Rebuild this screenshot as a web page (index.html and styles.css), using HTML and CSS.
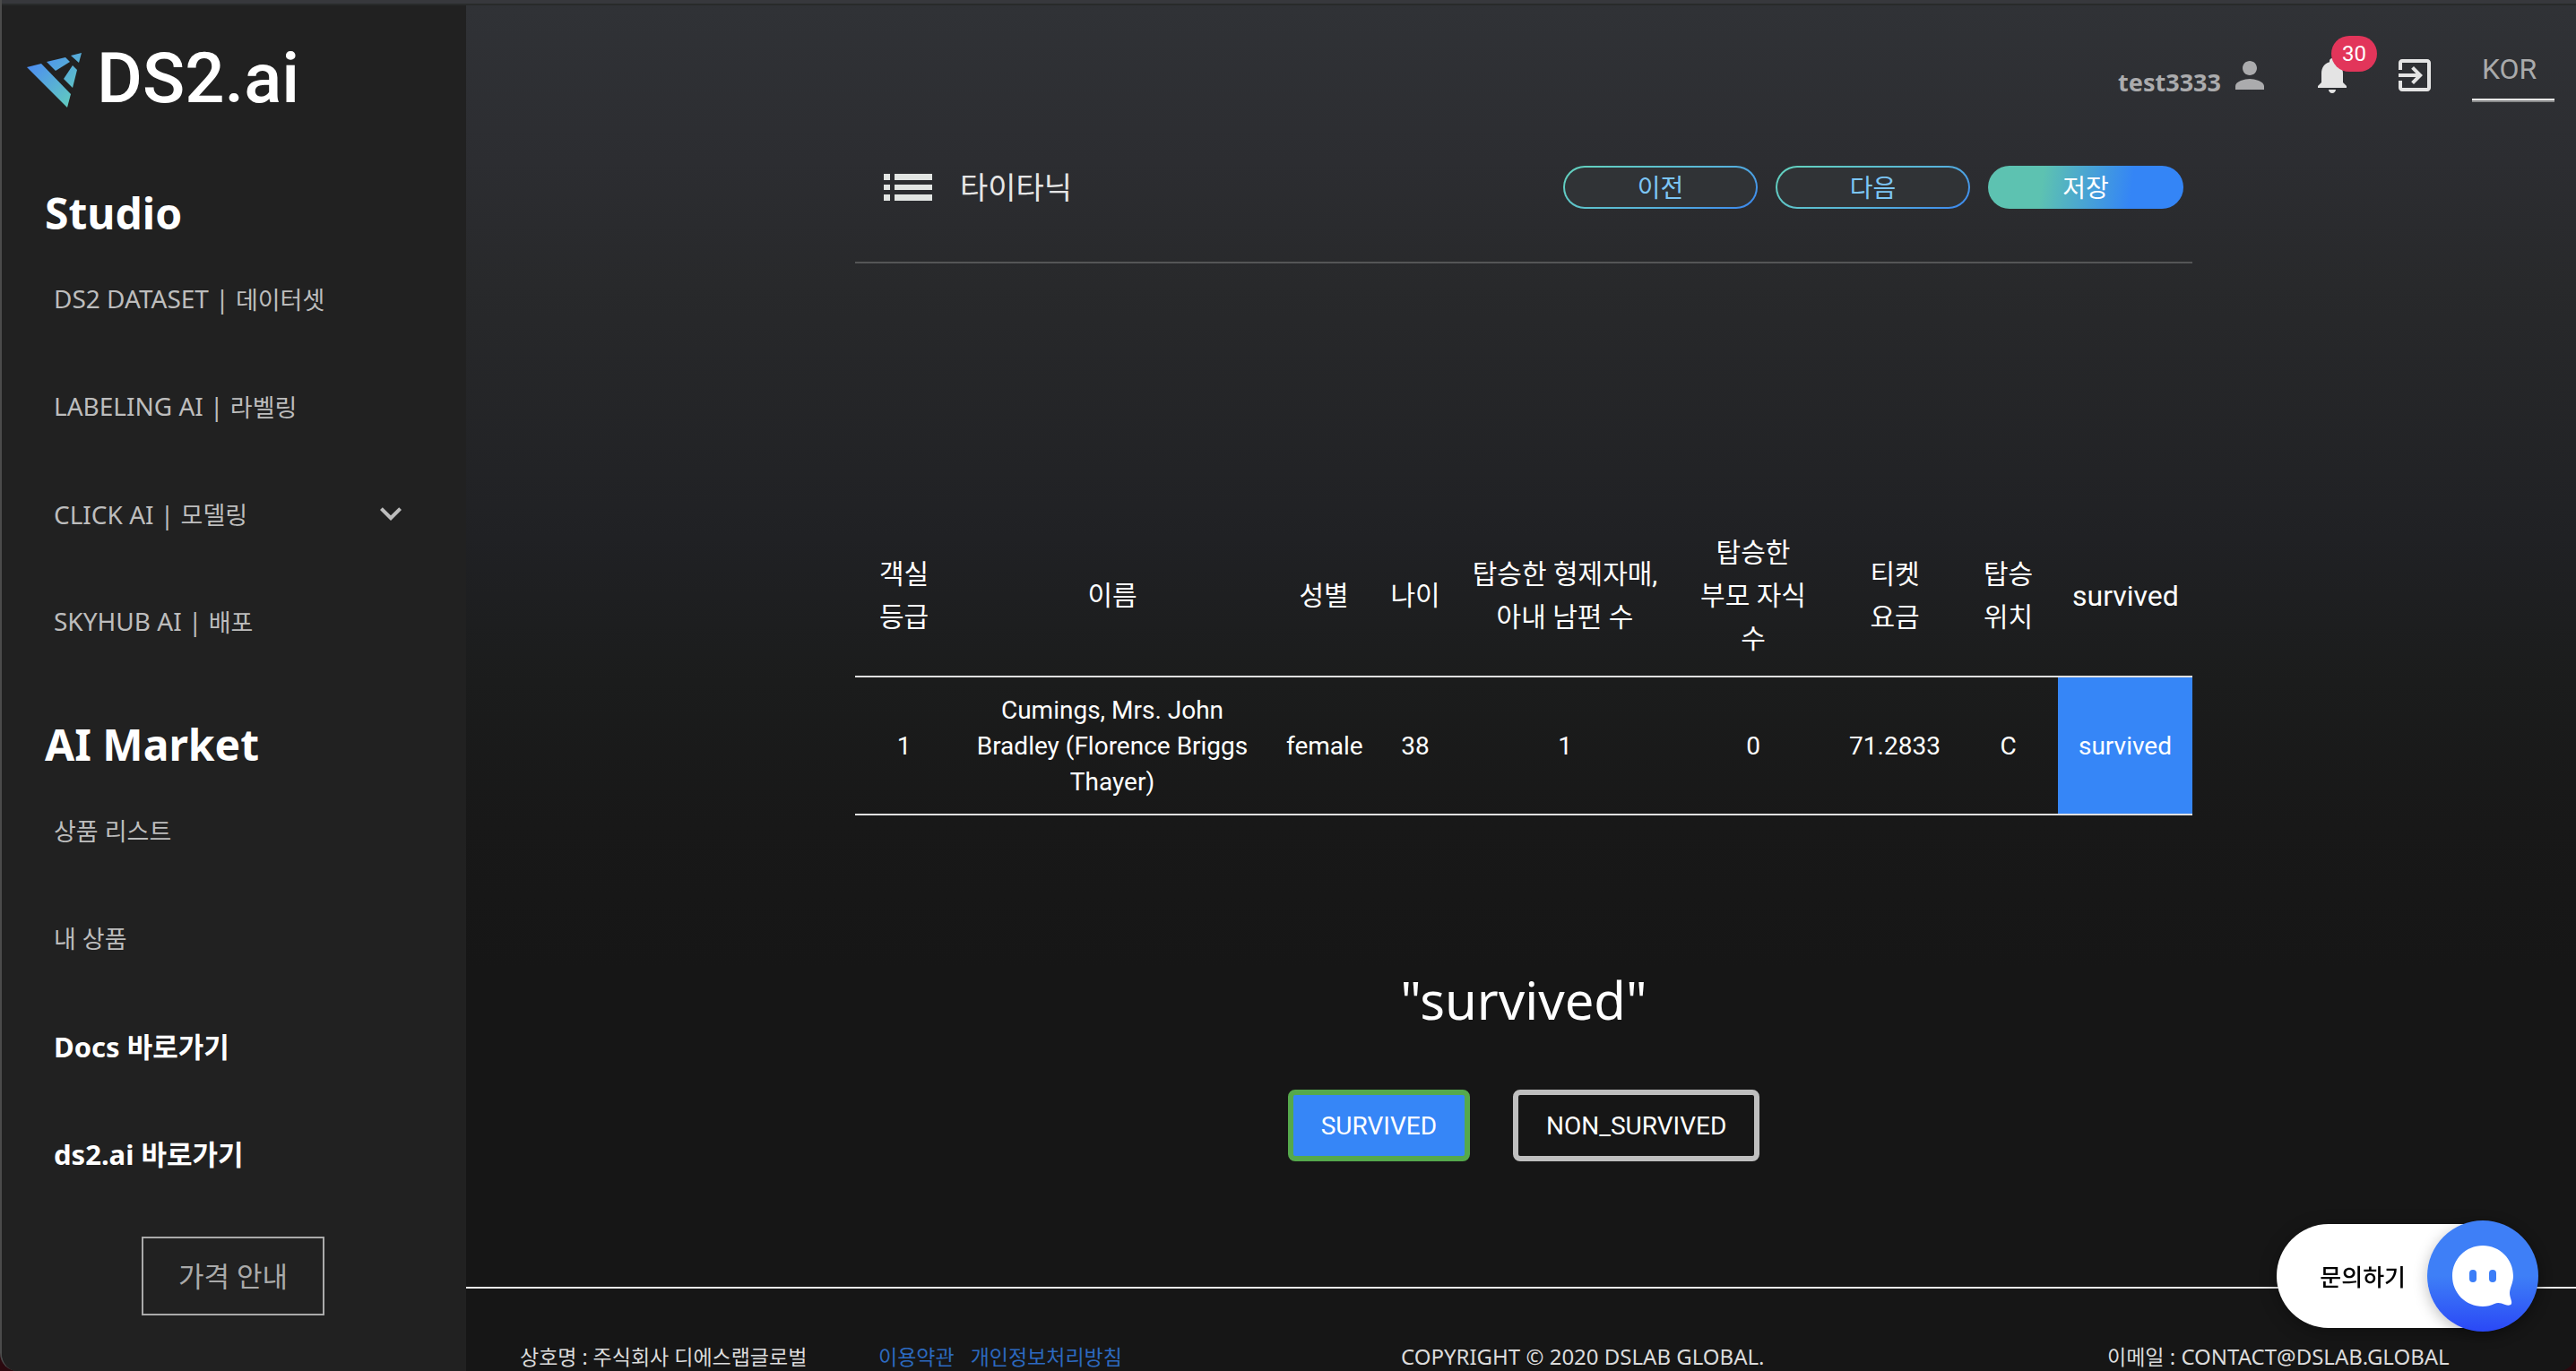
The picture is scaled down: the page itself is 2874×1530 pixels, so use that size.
FILE: index.html
```html
<!DOCTYPE html>
<html lang="ko">
<head>
<meta charset="utf-8">
<title>DS2.ai</title>
<meta name="viewport" content="width=device-width, initial-scale=1">
<link rel="stylesheet" href="styles.css">
</head>
<body>
<div class="window">
  <aside class="sidebar">
    <a class="logo" href="#">
      <svg class="logo-mark" viewBox="0 0 62 62" aria-hidden="true">
        <defs>
          <linearGradient id="mark" gradientUnits="userSpaceOnUse" x1="6" y1="12" x2="52" y2="58">
            <stop offset="0" stop-color="#4d8ff0"/>
            <stop offset="1" stop-color="#62cdbd"/>
          </linearGradient>
        </defs>
        <g fill="url(#mark)">
          <path d="M0 16L16 12L49 46L45 61Z"/>
          <path d="M22 10L43 5L48 10L32 20Z"/>
          <path d="M49 3L61 0L58 11Z"/>
          <path d="M51 14L56 19L51 39L41 29Z"/>
        </g>
      </svg>
      <span class="logo-text">DS2.ai</span>
    </a>
    <nav class="nav">
      <h2 class="nav-title">Studio</h2>
      <ul class="nav-list">
        <li><a class="nav-link" href="#">DS2 DATASET | <span class="ko">데이터셋</span></a></li>
        <li><a class="nav-link" href="#">LABELING AI | <span class="ko">라벨링</span></a></li>
        <li><a class="nav-link" href="#"><span class="nav-label">CLICK AI | <span class="ko">모델링</span></span>
          <svg class="icon" viewBox="0 0 24 24" aria-hidden="true"><path d="M16.59 8.59L12 13.17 7.41 8.59 6 10l6 6 6-6z"/></svg></a></li>
        <li><a class="nav-link" href="#">SKYHUB AI | <span class="ko">배포</span></a></li>
      </ul>
      <h2 class="nav-title">AI Market</h2>
      <ul class="nav-list">
        <li><a class="nav-link" href="#"><span class="ko">상품 리스트</span></a></li>
        <li><a class="nav-link" href="#"><span class="ko">내 상품</span></a></li>
        <li><a class="nav-link strong" href="#">Docs 바로가기</a></li>
        <li><a class="nav-link strong" href="#">ds2.ai 바로가기</a></li>
      </ul>
      <button class="price" type="button">가격 안내</button>
    </nav>
  </aside>

  <div class="page">
    <header class="topbar">
      <a class="user" href="#">test3333
        <svg class="icon" viewBox="0 0 24 24" aria-hidden="true"><path d="M12 12c2.21 0 4-1.79 4-4s-1.79-4-4-4-4 1.79-4 4 1.79 4 4 4zm0 2c-2.67 0-8 1.34-8 4v2h16v-2c0-2.66-5.33-4-8-4z"/></svg></a>
      <button class="icon-button bell" type="button" aria-label="알림">
        <svg class="icon" viewBox="0 0 24 24" aria-hidden="true"><path d="M12 22c1.1 0 2-.9 2-2h-4c0 1.1.89 2 2 2zm6-6v-5c0-3.07-1.64-5.64-4.5-6.32V4c0-.83-.67-1.5-1.5-1.5s-1.5.67-1.5 1.5v.68C7.63 5.36 6 7.92 6 11v5l-2 2v1h16v-1l-2-2z"/></svg>
        <span class="badge">30</span>
      </button>
      <button class="icon-button" type="button" aria-label="로그아웃">
        <svg class="icon" viewBox="0 0 24 24" aria-hidden="true"><path d="M10.09 15.59L11.5 17l5-5-5-5-1.41 1.41L12.67 11H3v2h9.67l-2.58 2.59zM19 3H5c-1.11 0-2 .9-2 2v4h2V5h14v14H5v-4H3v4c0 1.1.89 2 2 2h14c1.1 0 2-.9 2-2V5c0-1.1-.9-2-2-2z"/></svg>
      </button>
      <select class="lang" aria-label="언어"><option>KOR</option><option>ENG</option></select>
    </header>

    <main class="content">
      <div class="toolbar">
        <svg class="list-icon" viewBox="0 0 54 30" aria-hidden="true"><path d="M0 0h7v7H0zM12 0h42v7H12zM0 12h7v6H0zM12 12h42v6H12zM0 23h7v7H0zM12 23h42v7H12z"/></svg>
        <h1 class="title">타이타닉</h1>
        <div class="actions">
          <button class="pill" type="button">이전</button>
          <button class="pill" type="button">다음</button>
          <button class="pill filled" type="button">저장</button>
        </div>
      </div>

      <table class="data">
        <colgroup>
          <col class="w-class"><col class="w-name"><col class="w-sex"><col class="w-age"><col class="w-sib"><col class="w-par"><col class="w-fare"><col class="w-port"><col class="w-label">
        </colgroup>
        <thead>
          <tr><th>객실 등급</th><th>이름</th><th>성별</th><th>나이</th><th>탑승한 형제자매, 아내 남편 수</th><th>탑승한 부모 자식 수</th><th>티켓 요금</th><th>탑승 위치</th><th class="latin">survived</th></tr>
        </thead>
        <tbody>
          <tr><td>1</td><td>Cumings, Mrs. John Bradley (Florence Briggs Thayer)</td><td>female</td><td>38</td><td>1</td><td>0</td><td>71.2833</td><td>C</td><td class="marked">survived</td></tr>
        </tbody>
      </table>

      <h2 class="question">"survived"</h2>
      <div class="choices">
        <button class="choice selected" type="button">SURVIVED</button>
        <button class="choice" type="button">NON_SURVIVED</button>
      </div>
    </main>

    <footer class="footer">
      <span class="ko">상호명 : 주식회사 디에스랩글로벌</span>
      <span class="ko footer-links"><a href="#">이용약관</a><a href="#">개인정보처리방침</a></span>
      <span>COPYRIGHT © 2020 DSLAB GLOBAL.</span>
      <span><span class="ko">이메일</span> : CONTACT@DSLAB.GLOBAL</span>
    </footer>
  </div>
</div>

<button class="chat" type="button">
  <span class="chat-label">문의하기</span>
  <span class="chat-circle">
    <svg class="chat-face" viewBox="0 0 68 68" aria-hidden="true">
      <path fill="#fff" d="M34 0C53 0 68 15 68 34C68 42 64 47 64 53C64 58 67 62 66 65C65 67 62 67 59 66C54 64 51 63 47 65C43 67 39 68 34 68C15 68 0 53 0 34C0 15 15 0 34 0Z"/>
      <rect x="19" y="27" width="8" height="14" rx="4" fill="#3c7ef8"/>
      <rect x="41" y="27" width="8" height="14" rx="4" fill="#3c7ef8"/>
    </svg>
  </span>
</button>
</body>
</html>
```
FILE: styles.css
```css
* {
  box-sizing: border-box;
}

html {
  background: #2b090f;
}

body {
  margin: 0;
  height: 100vh;
  overflow: hidden;
  font-family: "Noto Sans", "Noto Sans CJK KR", sans-serif;
  font-size: 28px;
  color: #fff;
}

a {
  color: inherit;
  text-decoration: none;
}

button {
  margin: 0;
  padding: 0;
  border: 0;
  background: none;
  color: inherit;
  font: inherit;
  cursor: pointer;
}

.icon {
  width: 48px;
  height: 48px;
  fill: currentColor;
  display: block;
}

.window {
  display: flex;
  height: 100vh;
  overflow: hidden;
  border-left: 2px solid #4b4b4b;
  border-radius: 0 0 20px 20px;
  background: linear-gradient(#37383c 4px, #282a2a 4px, #282a2a 6px, #303236 6px, #2c2d31 180px, #28292b 320px, #202124 600px, #1b1c1c 760px, #181818 920px, #161616 1080px);
}

/* Sidebar */
.sidebar {
  flex: 0 0 518px;
  margin-top: 6px;
  padding-top: 40px;
  background: #212121;
}

.logo {
  display: flex;
  gap: 16px;
  padding-left: 28px;
  line-height: 84px;
}

.logo-mark {
  width: 62px;
  height: 62px;
  margin-top: 13px;
}

.logo-text {
  font-family: Roboto, sans-serif;
  font-size: 78px;
  font-weight: 500;
}

.nav {
  display: flex;
  flex-direction: column;
  padding: 76px 50px 0 48px;
}

.nav-title {
  margin: 0 0 3px;
  font-size: 48px;
  line-height: 64px;
}

.nav-list {
  margin: 0 0 46px;
  padding: 0;
  list-style: none;
}

.nav-link {
  display: flex;
  align-items: center;
  height: 120px;
  padding: 0 10px;
  white-space: pre;
  color: #bdbdbd;
}

.nav-link .icon {
  margin-left: auto;
}

.nav-link .ko {
  font-size: 27px;
}

.nav-link.strong {
  color: #fff;
  font-size: 31px;
  font-weight: 700;
}

.price {
  align-self: center;
  width: 204px;
  height: 88px;
  margin-top: -12px;
  border: 2px solid #aaa;
  color: #aaa;
  font-size: 31px;
  line-height: 80px;
}

/* Top bar */
.page {
  flex: 1;
  min-width: 0;
  display: flex;
  flex-direction: column;
}

.topbar {
  flex: none;
  display: flex;
  justify-content: flex-end;
  align-items: flex-start;
  height: 160px;
  padding: 60px 24px 0 0;
}

.user {
  display: flex;
  gap: 8px;
  margin-right: 44px;
  color: #ababad;
  font-size: 27px;
  font-weight: 700;
  line-height: 64px;
}

.icon-button {
  position: relative;
  margin-right: 44px;
  color: #e4e4e4;
}

.icon-button + .lang {
  margin-left: -4px;
}

.badge {
  position: absolute;
  left: 23px;
  top: -20px;
  width: 51px;
  border-radius: 20px;
  background: #e2355a;
  color: #fff;
  font: 24px/40px Roboto, sans-serif;
}

.lang {
  appearance: none;
  width: 92px;
  height: 68px;
  margin-top: -16px;
  padding: 0 11px;
  border: 0;
  border-bottom: 2px solid #e8e8e8;
  border-radius: 0;
  box-shadow: 0 2px #88898a;
  background: none;
  color: #a9aaab;
  font: 32px/60px Roboto, sans-serif;
}

/* Content */
.content {
  flex: none;
  width: 100%;
  max-width: 1498px;
  margin: 0 auto;
  padding-left: 6px;
}

.toolbar {
  display: flex;
  align-items: center;
  height: 134px;
  padding: 0 10px 34px 32px;
  border-bottom: 2px solid #555657;
}

.list-icon {
  width: 54px;
  height: 30px;
  fill: #e2e5e3;
}

.title {
  margin: 0 0 0 31px;
  color: #e6e6e6;
  font-size: 34px;
  font-weight: 400;
  line-height: 48px;
}

.actions {
  display: flex;
  gap: 20px;
  margin-left: auto;
}

.pill {
  width: 217px;
  height: 48px;
  border: 2px solid transparent;
  border-radius: 24px;
  background: linear-gradient(#303336, #303336) padding-box, linear-gradient(150deg, #62cfc0 10%, #58b4da 60%, #3a86f0) border-box;
  color: #7cc6f6;
  line-height: 40px;
}

.pill.filled {
  width: 218px;
  background: linear-gradient(98deg, #5dc2b1 28%, #3485f6 73%) border-box;
  color: #fff;
}

.data {
  width: 100%;
  margin-top: 280px;
  border-collapse: collapse;
  table-layout: fixed;
  text-align: center;
  word-break: keep-all;
  font-family: Roboto, "Noto Sans CJK KR", sans-serif;
}

.data th {
  padding: 19px 16px 17px;
  border-bottom: 2px solid #e0e0e0;
  font-size: 30px;
  font-weight: 400;
  line-height: 48px;
}

.data th.latin {
  font-size: 32px;
}

.data td {
  padding: 17px 16px 15px;
  border-bottom: 2px solid #e0e0e0;
  line-height: 40px;
}

.data td.marked {
  background: #3686f7;
}

.w-class { width: 109px; }
.w-name { width: 356px; }
.w-sex { width: 116px; }
.w-age { width: 88px; }
.w-sib { width: 246px; }
.w-par { width: 174px; }
.w-fare { width: 142px; }
.w-port { width: 111px; }
.w-label { width: 150px; }

.question {
  margin: 165px 0 59px;
  font-size: 58px;
  font-weight: 400;
  line-height: 82px;
  text-align: center;
}

.choices {
  display: flex;
  justify-content: center;
  gap: 48px;
}

.choice {
  height: 80px;
  padding: 0 31px;
  border: 6px solid #bfbfbf;
  border-radius: 8px;
  font-family: Roboto, sans-serif;
}

.choice.selected {
  border-color: #55a94c;
  background: #3686f7;
}

/* Footer */
.footer {
  flex: none;
  display: grid;
  grid-template-columns: 400fr 583fr 788fr 523fr;
  align-items: baseline;
  margin-top: 140px;
  padding: 62px 0 0 60px;
  border-top: 2px solid #e8e8e8;
  color: #dcdcdc;
  font-size: 24px;
  line-height: 28px;
  white-space: nowrap;
}

.footer .ko {
  font-size: 23px;
}

.footer-links {
  display: flex;
  gap: 18px;
  color: #2c69bf;
}

/* Chat launcher */
.chat {
  position: fixed;
  right: 42px;
  bottom: 44px;
  display: flex;
  align-items: center;
  padding-left: 48px;
  color: #000;
  font-size: 26px;
  font-weight: 500;
}

.chat::before {
  content: "";
  position: absolute;
  inset: 4px 4px 4px 0;
  border-radius: 58px;
  background: #fff;
  box-shadow: 0 4px 20px rgba(0, 0, 0, 0.3);
}

.chat-label {
  position: relative;
  margin-right: 24px;
}

.chat-circle {
  position: relative;
  display: grid;
  place-items: center;
  width: 124px;
  height: 124px;
  border-radius: 50%;
  background: linear-gradient(#3e7ff7 50%, #2a48f6);
  box-shadow: 0 4px 16px rgba(0, 0, 0, 0.25);
}

.chat-face {
  width: 68px;
  height: 68px;
}
```
